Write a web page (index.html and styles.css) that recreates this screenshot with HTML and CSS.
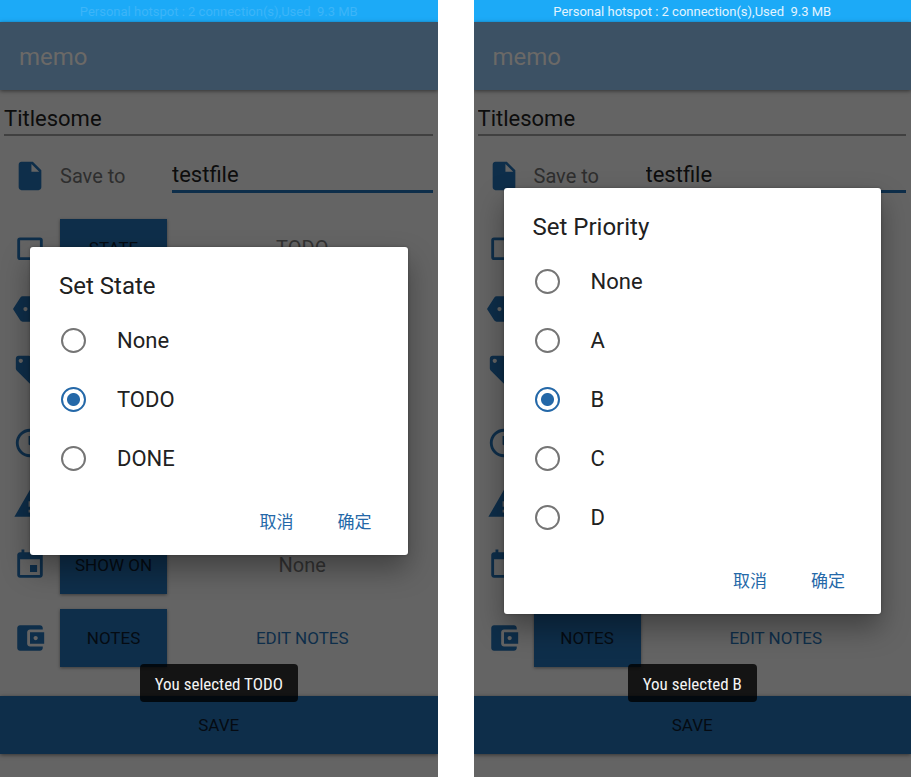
FILE: index.html
```html
<!DOCTYPE html>
<html lang="en">
<head>
<meta charset="utf-8">
<meta name="viewport" content="width=device-width, initial-scale=1">
<title>memo</title>
<link rel="stylesheet" href="styles.css">
</head>
<body>
<svg class="sprite" aria-hidden="true">
  <symbol id="i-file" viewBox="0 0 24 24"><path d="M6 2c-1.100 0-1.990.9-1.990 2L4 20c0 1.100.89 2 1.990 2H18c1.100 0 2-.9 2-2V8l-6-6H6zm7 7V3.500L18.500 9H13z"/></symbol>
  <symbol id="i-state" viewBox="0 0 24 24"><path fill-rule="evenodd" d="M5 4.500h14a2 2 0 0 1 2 2v12a2 2 0 0 1-2 2H5a2 2 0 0 1-2-2v-12a2 2 0 0 1 2-2zm0 2v12h14v-12z"/></symbol>
  <symbol id="i-label" viewBox="0 0 24 24"><path fill-rule="evenodd" d="M0 12l5.200-8.200C5.600 3.300 6.200 3 6.800 3H20a2 2 0 0 1 2 2v14a2 2 0 0 1-2 2H6.800c-.6 0-1.200-.3-1.600-.8zM8.800 10.500a1.500 1.500 0 1 0 0 3 1.500 1.500 0 0 0 0-3z"/></symbol>
  <symbol id="i-tag" viewBox="0 0 24 24"><path d="M21.410 11.580l-9-9C12.050 2.220 11.550 2 11 2H4c-1.100 0-2 .9-2 2v7c0 .55.22 1.050.59 1.420l9 9c.36.36.86.58 1.410.58.55 0 1.050-.22 1.410-.59l7-7c.37-.36.59-.86.59-1.410 0-.55-.23-1.060-.59-1.420zM5.500 7C4.670 7 4 6.330 4 5.500S4.670 4 5.500 4 7 4.670 7 5.500 6.330 7 5.500 7z"/></symbol>
  <symbol id="i-clock" viewBox="0 0 24 24"><path d="M11.990 2C6.470 2 2 6.480 2 12s4.470 10 9.990 10C17.520 22 22 17.520 22 12S17.520 2 11.990 2zM12 20c-4.420 0-8-3.580-8-8s3.580-8 8-8 8 3.580 8 8-3.580 8-8 8zm.5-13H11v6l5.250 3.150.75-1.230-4.500-2.670z"/></symbol>
  <symbol id="i-warning" viewBox="0 0 24 24"><path d="M1 21h22L12 2 1 21zm12-3h-2v-2h2v2zm0-4h-2v-4h2v4z"/></symbol>
  <symbol id="i-event" viewBox="0 0 24 24"><path d="M17 12h-5v5h5v-5zM16 1v2H8V1H6v2H5c-1.110 0-1.990.9-1.990 2L3 19c0 1.100.89 2 2 2h14c1.100 0 2-.9 2-2V5c0-1.100-.9-2-2-2h-1V1h-2zm3 18H5V8h14v11z"/></symbol>
  <symbol id="i-wallet" viewBox="0 0 24 24"><path d="M21 18v1c0 1.100-.9 2-2 2H5c-1.110 0-2-.9-2-2V5c0-1.100.89-2 2-2h14c1.100 0 2 .9 2 2v1h-9c-1.110 0-2 .9-2 2v8c0 1.100.89 2 2 2h9zm-9-2h10V8H12v8zm4-2.500c-.83 0-1.500-.67-1.500-1.500s.67-1.500 1.500-1.500 1.500.67 1.500 1.500-.67 1.500-1.500 1.500z"/></symbol>
</svg>

<main class="screens">
  <section class="phone">
    <div class="status status-faded">Personal hotspot : 2 connection(s),Used&nbsp; 9.3 MB</div>
    <header class="appbar"><h1>memo</h1></header>
    <form class="memo">
      <input class="field title-field" type="text" value="Titlesome" aria-label="Title">
      <div class="row row-file">
        <svg class="icon"><use href="#i-file"/></svg>
        <label class="caption" for="file-a">Save to</label>
        <input class="field file-field" id="file-a" type="text" value="testfile">
      </div>
      <div class="row"><svg class="icon"><use href="#i-state"/></svg><button class="tile" type="button">STATE</button><span class="value">TODO</span></div>
      <div class="row row-short"><svg class="icon"><use href="#i-label"/></svg></div>
      <div class="row"><svg class="icon"><use href="#i-tag"/></svg></div>
      <div class="row"><svg class="icon"><use href="#i-clock"/></svg></div>
      <div class="row row-short"><svg class="icon"><use href="#i-warning"/></svg></div>
      <div class="row"><svg class="icon"><use href="#i-event"/></svg><button class="tile" type="button">SHOW ON</button><span class="value">None</span></div>
      <div class="row"><svg class="icon"><use href="#i-wallet"/></svg><button class="tile" type="button">NOTES</button><button class="edit" type="button">EDIT NOTES</button></div>
      <button class="save" type="button">SAVE</button>
    </form>
    <div class="overlay">
      <form class="dialog" role="dialog" aria-labelledby="state-title">
        <h2 id="state-title">Set State</h2>
        <label class="option"><input type="radio" name="state">None</label>
        <label class="option"><input type="radio" name="state" checked>TODO</label>
        <label class="option"><input type="radio" name="state">DONE</label>
        <div class="actions" lang="zh-CN"><button type="button">取消</button><button type="button">确定</button></div>
      </form>
    </div>
    <div class="toast-layer"><div class="toast" role="status">You selected TODO</div></div>
  </section>

  <section class="phone">
    <div class="status">Personal hotspot : 2 connection(s),Used&nbsp; 9.3 MB</div>
    <header class="appbar"><h1>memo</h1></header>
    <form class="memo">
      <input class="field title-field" type="text" value="Titlesome" aria-label="Title">
      <div class="row row-file">
        <svg class="icon"><use href="#i-file"/></svg>
        <label class="caption" for="file-b">Save to</label>
        <input class="field file-field" id="file-b" type="text" value="testfile">
      </div>
      <div class="row"><svg class="icon"><use href="#i-state"/></svg></div>
      <div class="row row-short"><svg class="icon"><use href="#i-label"/></svg></div>
      <div class="row"><svg class="icon"><use href="#i-tag"/></svg></div>
      <div class="row"><svg class="icon"><use href="#i-clock"/></svg></div>
      <div class="row row-short"><svg class="icon"><use href="#i-warning"/></svg></div>
      <div class="row"><svg class="icon"><use href="#i-event"/></svg></div>
      <div class="row"><svg class="icon"><use href="#i-wallet"/></svg><button class="tile" type="button">NOTES</button><button class="edit" type="button">EDIT NOTES</button></div>
      <button class="save" type="button">SAVE</button>
    </form>
    <div class="overlay">
      <form class="dialog" role="dialog" aria-labelledby="priority-title">
        <h2 id="priority-title">Set Priority</h2>
        <label class="option"><input type="radio" name="priority">None</label>
        <label class="option"><input type="radio" name="priority">A</label>
        <label class="option"><input type="radio" name="priority" checked>B</label>
        <label class="option"><input type="radio" name="priority">C</label>
        <label class="option"><input type="radio" name="priority">D</label>
        <div class="actions" lang="zh-CN"><button type="button">取消</button><button type="button">确定</button></div>
      </form>
    </div>
    <div class="toast-layer"><div class="toast" role="status">You selected B</div></div>
  </section>
</main>
</body>
</html>
```

FILE: styles.css
```css
* {
  box-sizing: border-box;
}

body {
  margin: 0;
  background: #fff;
  font-family: Roboto, "Noto Sans CJK SC", sans-serif;
}

button,
input {
  margin: 0;
  padding: 0;
  border: 0;
  border-radius: 0;
  background: none;
  color: inherit;
  font: inherit;
}

h1,
h2 {
  margin: 0;
  font-size: 24px;
  font-weight: 400;
}

.sprite {
  display: none;
}

.screens {
  display: grid;
  grid-template-columns: 1fr 1fr;
  gap: 36px;
  min-height: 100vh;
}

.phone {
  position: relative;
  min-width: 0;
  overflow: hidden;
  background: #646464;
}

/* Status and app bars */
.status {
  height: 22px;
  background: #1caaf7;
  color: #e2f4fe;
  font-size: 13px;
  line-height: 24px;
  text-align: center;
}

.status-faded {
  color: #3cb5f8;
}

.appbar {
  display: flex;
  align-items: center;
  height: 68px;
  padding: 2px 19px 0;
  background: #3c5164;
  box-shadow: 0 1px 4px rgba(0, 0, 0, 0.5);
  color: #6b6967;
}

/* Memo form, dimmed behind the dialog */
.memo {
  color: #0d0d0d;
}

.field {
  display: block;
  font-size: 22px;
  outline: 0;
}

.title-field {
  width: calc(100% - 9px);
  height: 46px;
  margin: 0 5px 4px 4px;
  padding-top: 12px;
  border-bottom: 2px solid #404040;
}

.row {
  display: grid;
  grid-template-columns: 42px 107px 1fr;
  column-gap: 5px;
  align-items: center;
  height: 73px;
  padding: 0 5px 0 13px;
}

.row-file {
  height: 71px;
}

.row-short {
  height: 49px;
}

.icon {
  width: 34px;
  height: 34px;
  fill: #0e2e4a;
}

.caption {
  color: #2e2e2e;
  font-size: 20px;
}

.file-field {
  width: 100%;
  height: 35px;
  border-bottom: 3px solid #0e2e4a;
}

.tile {
  height: 58px;
  background: #0e2e4a;
  box-shadow: 0 1px 3px rgba(0, 0, 0, 0.4);
  color: #050b12;
  font-size: 17px;
}

.value {
  color: #333;
  font-size: 20px;
  text-align: center;
}

.edit {
  color: #0e2e4a;
  font-size: 17px;
}

.save {
  display: block;
  width: 100%;
  height: 58px;
  margin-top: 22px;
  background: #0e2e4a;
  box-shadow: 0 1px 4px rgba(0, 0, 0, 0.5);
  color: #050b12;
  font-size: 17px;
}

/* Dialog */
.overlay {
  position: absolute;
  inset: 24px 0 0;
  display: flex;
  align-items: center;
  padding: 0 30px;
}

.dialog {
  width: 100%;
  border-radius: 3px;
  background: #fff;
  box-shadow: 0 14px 28px rgba(0, 0, 0, 0.35), 0 0 3px rgba(0, 0, 0, 0.3);
  color: #212121;
}

.dialog h2 {
  height: 64px;
  padding-left: 29px;
  line-height: 78px;
}

.option {
  display: flex;
  align-items: center;
  gap: 31px;
  height: 59px;
  padding-left: 31px;
  font-size: 22px;
}

.option input {
  appearance: none;
  width: 25px;
  height: 25px;
  border: 2px solid #757575;
  border-radius: 50%;
}

.option input:checked {
  border-color: #2468a8;
  background: radial-gradient(circle, #2468a8 6px, transparent 7px);
}

.actions {
  display: flex;
  align-items: center;
  justify-content: flex-end;
  gap: 44px;
  height: 67px;
  padding: 0 36px 2px 0;
  color: #2468a8;
  font-size: 17px;
}

/* Toast */
.toast-layer {
  position: absolute;
  inset: auto 0 75px;
  display: flex;
  justify-content: center;
}

.toast {
  height: 38px;
  padding: 0 15px;
  border-radius: 4px;
  background: rgba(0, 0, 0, 0.8);
  color: #f5f5f5;
  font-family: "Roboto Condensed", Roboto, sans-serif;
  font-size: 17px;
  line-height: 40px;
  white-space: nowrap;
}
```
